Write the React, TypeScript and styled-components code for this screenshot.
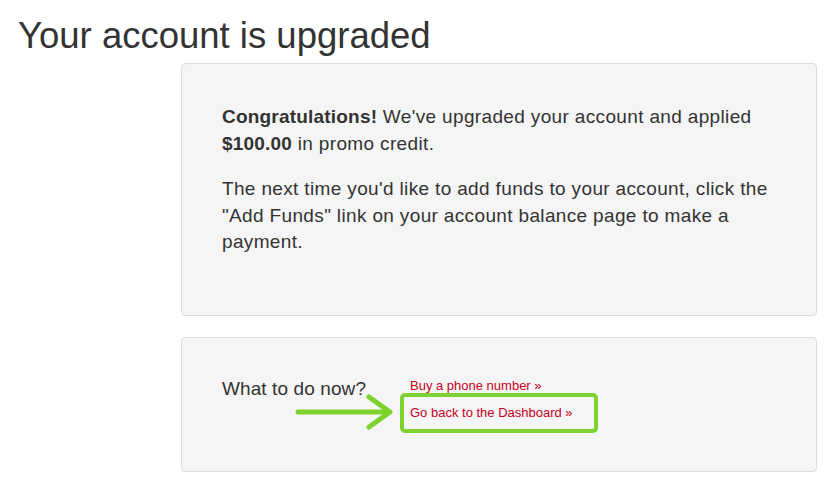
import React from "react";
import styled, { createGlobalStyle } from "styled-components";

const Global = createGlobalStyle`
  html, body { margin: 0; padding: 0; background: #fff; }
  body { font-family: "Liberation Sans", Arial, sans-serif; color: #333; }
`;

const Page = styled.div`
  width: 838px;
  height: 486px;
  box-sizing: border-box;
  padding: 14px 21px 0 18px;
  display: flex;
  flex-direction: column;
`;

const Title = styled.h1`
  margin: 0;
  font-weight: 400;
  font-size: 36.5px;
  line-height: 44px;
  color: #333;
`;

const Panel = styled.div<{ $h: number; $mt: number; $pt: number }>`
  margin-left: 163px;
  margin-top: ${(p) => p.$mt}px;
  height: ${(p) => p.$h}px;
  box-sizing: border-box;
  background: #f5f5f5;
  border: 1px solid #dcdcdc;
  border-radius: 4px;
  padding: ${(p) => p.$pt}px 40px 0 40px;
`;

const Para = styled.p`
  margin: 0 0 19px 0;
  font-size: 19px;
  line-height: 26.5px;
  letter-spacing: 0.35px;
  color: #333;
  b { font-weight: 700; letter-spacing: 0.2px; }
`;

const Row = styled.div`
  display: flex;
  align-items: flex-start;
`;

const Question = styled.div`
  font-size: 19px;
  line-height: 26px;
  letter-spacing: 0.1px;
  width: 188px;
  color: #333;
`;

const Links = styled.div`
  position: relative;
  margin-top: 2px;
  display: flex;
  flex-direction: column;
  gap: 11px;
`;

const Link = styled.a`
  font-size: 13px;
  line-height: 16px;
  color: #c8001e;
  text-decoration: none;
`;

const Highlight = styled.div`
  position: absolute;
  left: -10px;
  top: 15px;
  width: 198px;
  height: 40px;
  box-sizing: border-box;
  border: 4px solid #7ed22f;
  border-radius: 5px;
`;

const Arrow = styled.svg`
  position: absolute;
  left: -115px;
  top: 14px;
`;

export default function App() {
  return (
    <>
      <Global />
      <Page>
        <Title>Your account is upgraded</Title>
        <Panel $h={253} $mt={5} $pt={40}>
          <Para>
            <b>Congratulations!</b> We've upgraded your account and applied
            <br />
            <b>$100.00</b> in promo credit.
          </Para>
          <Para>
            The next time you'd like to add funds to your account, click the
            <br />
            "Add Funds" link on your account balance page to make a
            <br />
            payment.
          </Para>
        </Panel>
        <Panel $h={135} $mt={21} $pt={38}>
          <Row>
            <Question>What to do now?</Question>
            <Links>
              <Link href="#">Buy a phone number »</Link>
              <Link href="#">Go back to the Dashboard »</Link>
              <Highlight />
              <Arrow width="100" height="40" viewBox="0 0 100 40">
                <g stroke="#7ed22f" strokeWidth="5" strokeLinecap="round" strokeLinejoin="round" fill="none">
                  <line x1="3" y1="20" x2="92" y2="20" />
                  <polyline points="74,5 95,20 74,35" />
                </g>
              </Arrow>
            </Links>
          </Row>
        </Panel>
      </Page>
    </>
  );
}
